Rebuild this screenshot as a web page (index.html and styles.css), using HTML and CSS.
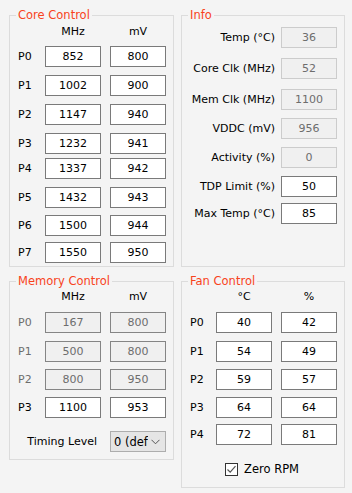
FILE: index.html
```html
<!DOCTYPE html>
<html lang="en">
<head>
  <meta charset="UTF-8">
  <title>Overdrive</title>
  <link rel="stylesheet" href="styles.css">
</head>
<body>
  <div class="panel">
    <div class="col">
      <fieldset class="group core">
        <legend>Core Control</legend>
        <div class="grid states core-states">
          <span></span><span class="head">MHz</span><span class="head">mV</span>
          <label>P0</label><input class="box" value="852"><input class="box" value="800">
          <label>P1</label><input class="box" value="1002"><input class="box" value="900">
          <label>P2</label><input class="box" value="1147"><input class="box" value="940">
          <label>P3</label><input class="box" value="1232"><input class="box" value="941">
          <label>P4</label><input class="box" value="1337"><input class="box" value="942">
          <label>P5</label><input class="box" value="1432"><input class="box" value="943">
          <label>P6</label><input class="box" value="1500"><input class="box" value="944">
          <label>P7</label><input class="box" value="1550"><input class="box" value="950">
        </div>
      </fieldset>

      <fieldset class="group memory">
        <legend>Memory Control</legend>
        <div class="grid states mem-states">
          <span></span><span class="head">MHz</span><span class="head">mV</span>
          <label class="off">P0</label><input class="box off" value="167" disabled><input class="box off" value="800" disabled>
          <label class="off">P1</label><input class="box off" value="500" disabled><input class="box off" value="800" disabled>
          <label class="off">P2</label><input class="box off" value="800" disabled><input class="box off" value="950" disabled>
          <label>P3</label><input class="box" value="1100"><input class="box" value="953">
          <label class="timing-label">Timing Level</label>
          <div class="dropdown">
            <span class="dropdown-text">0 (default)</span>
            <svg class="chevron" width="9" height="6" viewBox="0 0 9 6"><path d="M0.5 0.8 L4.5 4.8 L8.5 0.8" fill="none" stroke="#555" stroke-width="1"/></svg>
          </div>
        </div>
      </fieldset>
    </div>

    <div class="col">
      <fieldset class="group info">
        <legend>Info</legend>
        <div class="grid info-grid">
          <label>Temp (°C)</label><input class="box ro" value="36" readonly>
          <label>Core Clk (MHz)</label><input class="box ro" value="52" readonly>
          <label>Mem Clk (MHz)</label><input class="box ro" value="1100" readonly>
          <label>VDDC (mV)</label><input class="box ro" value="956" readonly>
          <label>Activity (%)</label><input class="box ro" value="0" readonly>
          <label>TDP Limit (%)</label><input class="box" value="50">
          <label>Max Temp (°C)</label><input class="box" value="85">
        </div>
      </fieldset>

      <fieldset class="group fan">
        <legend>Fan Control</legend>
        <div class="grid states fan-states">
          <span></span><span class="head">°C</span><span class="head">%</span>
          <label>P0</label><input class="box" value="40"><input class="box" value="42">
          <label>P1</label><input class="box" value="54"><input class="box" value="49">
          <label>P2</label><input class="box" value="59"><input class="box" value="57">
          <label>P3</label><input class="box" value="64"><input class="box" value="64">
          <label>P4</label><input class="box" value="72"><input class="box" value="81">
        </div>
        <div class="check-row">
          <span class="checkbox">
            <svg width="11" height="11" viewBox="0 0 11 11"><path d="M1.5 5.5 L4.2 8.2 L9.5 2.2" fill="none" stroke="#555" stroke-width="1.2"/></svg>
          </span>
          <span>Zero RPM</span>
        </div>
      </fieldset>
    </div>
  </div>
</body>
</html>
```

FILE: styles.css
```css
* {
  margin: 0;
  padding: 0;
  box-sizing: border-box;
}

body {
  font-family: "DejaVu Sans", Verdana, sans-serif;
  font-size: 11px;
  color: #000;
  background: #f4f4f4;
}

.panel {
  display: grid;
  grid-template-columns: 165px 164px;
  column-gap: 7px;
  padding: 8px 0 0 9px;
}

.col {
  display: flex;
  flex-direction: column;
  gap: 7px;
}

/* group boxes */
.group {
  border: 1px solid #dcdcdc;
  min-width: 0;
}

.group legend {
  margin-left: 6px;
  padding: 0 2px;
  font-size: 11.5px;
  line-height: 14px;
  color: #f8431c;
}

.core,
.info {
  height: 259px;
}

.memory {
  height: 186px;
}

.fan {
  height: 214px;
}

.grid {
  display: grid;
  align-items: start;
}

.grid label {
  height: 21px;
  line-height: 21px;
  white-space: nowrap;
}

.head {
  text-align: center;
  line-height: 14px;
}

/* text boxes */
.box {
  width: 56px;
  height: 21px;
  border: 1px solid #7a7a7a;
  background: #fff;
  font-family: "DejaVu Sans", Verdana, sans-serif;
  font-size: 11px;
  color: #000;
  text-align: center;
  outline: none;
}

.box.ro {
  background: #f0f0f0;
  border-color: #cccccc;
  color: #6d6d6d;
}

.box.off {
  background: #f0f0f0;
  border-color: #858585;
  color: #6d6d6d;
}

label.off {
  color: #6d6d6d;
}

/* P-state tables */
.states {
  column-gap: 9px;
}

.states label {
  padding-left: 8px;
}

.core-states {
  grid-template-columns: 26px 56px 56px;
  grid-template-rows: 21px 29px 29px 29px 25px 29px 28px 27px 21px;
  padding-top: 3px;
}

.mem-states {
  grid-template-columns: 26px 56px 56px;
  grid-template-rows: 22px 29px 28px 28px 34px 21px;
  padding-top: 2px;
}

.fan-states {
  grid-template-columns: 25px 56px 56px;
  grid-template-rows: 22px 29px 28px 28px 27px 21px;
  padding-top: 2px;
}

.mem-states label.timing-label {
  grid-column: 1 / 3;
  text-align: right;
  padding-right: 4px;
}

.dropdown {
  display: flex;
  align-items: center;
  width: 56px;
  height: 21px;
  border: 1px solid #adadad;
  background: #e5e5e5;
  padding: 0 5px 0 3px;
  gap: 3px;
}

.dropdown-text {
  flex: 1;
  overflow: hidden;
  white-space: nowrap;
  font-size: 11.5px;
}

/* info */
.info-grid {
  grid-template-columns: 93px 56px;
  grid-template-rows: 31px 31px 29px 29px 29px 27px 21px;
  column-gap: 6px;
  padding-top: 5px;
}

.info-grid label {
  text-align: right;
}

/* zero rpm */
.check-row {
  display: flex;
  justify-content: center;
  align-items: center;
  gap: 6px;
  margin-top: 17px;
  padding-right: 2px;
  font-size: 11.5px;
}

.checkbox {
  display: flex;
  align-items: center;
  justify-content: center;
  width: 13px;
  height: 13px;
  border: 1px solid #333;
  background: #fff;
}
```
